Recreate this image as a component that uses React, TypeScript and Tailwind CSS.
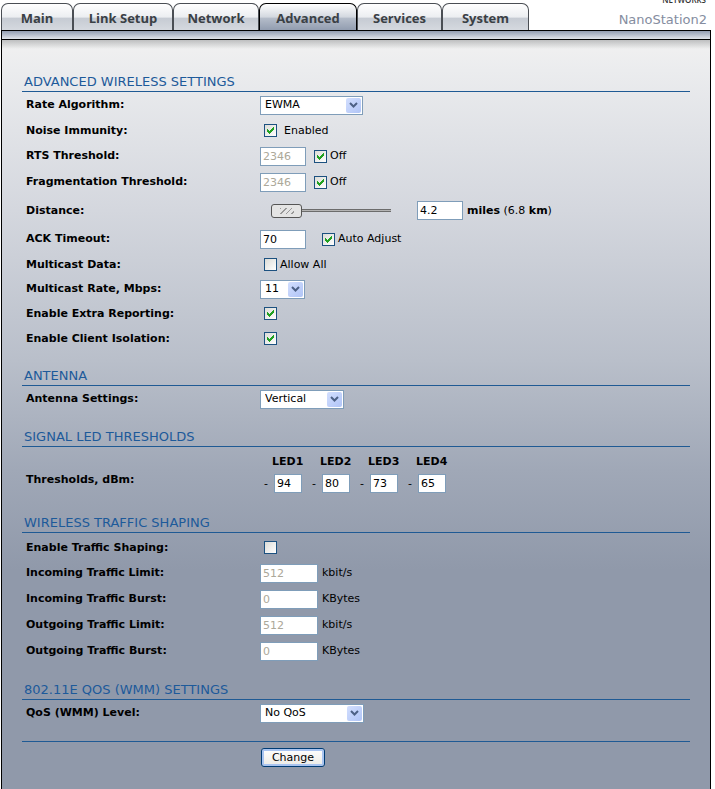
import { useState } from 'react'
import type { InputHTMLAttributes, ReactNode } from 'react'
import clsx from 'clsx'

const tabs = [
  { label: 'Main', width: 'w-[72px]' },
  { label: 'Link Setup', width: 'w-[100px]' },
  { label: 'Network', width: 'w-[86px]' },
  { label: 'Advanced', width: 'w-[98px]', active: true },
  { label: 'Services', width: 'w-[85px]' },
  { label: 'System', width: 'w-[87px]' },
]

const leds = [
  { id: 'led1', label: 'LED1', value: '94' },
  { id: 'led2', label: 'LED2', value: '80' },
  { id: 'led3', label: 'LED3', value: '73' },
  { id: 'led4', label: 'LED4', value: '65' },
]

const limits = [
  { id: 'in-limit', label: 'Incoming Traffic Limit:', value: '512', unit: 'kbit/s' },
  { id: 'in-burst', label: 'Incoming Traffic Burst:', value: '0', unit: 'KBytes' },
  { id: 'out-limit', label: 'Outgoing Traffic Limit:', value: '512', unit: 'kbit/s' },
  { id: 'out-burst', label: 'Outgoing Traffic Burst:', value: '0', unit: 'KBytes' },
]

function Section({ title, children }: { title: string; children: ReactNode }) {
  return (
    <section className="mb-[15px]">
      <h2 className="h-5 border-b border-[#1f5a94] pl-[2px] text-[13px] leading-5 text-[#1d5a9a]">{title}</h2>
      {children}
    </section>
  )
}

function Row({ label, htmlFor, height = 'h-[26px]', children }: {
  label: string
  htmlFor: string
  height?: string
  children: ReactNode
}) {
  return (
    <div className={clsx('flex items-center', height)}>
      <label htmlFor={htmlFor} className="w-[238px] shrink-0 pl-1 font-bold">{label}</label>
      <div className="flex items-center">{children}</div>
    </div>
  )
}

function TextBox({ className, ...props }: InputHTMLAttributes<HTMLInputElement>) {
  return (
    <input
      type="text"
      className={clsx('h-[19px] border border-[#7f9db9] bg-white px-[2px] text-black disabled:text-[#aca899]', className)}
      {...props}
    />
  )
}

function CheckBox({ id, checked = false }: { id: string; checked?: boolean }) {
  return (
    <span className="grid size-[13px] shrink-0">
      <input
        id={id}
        type="checkbox"
        defaultChecked={checked}
        className="peer col-start-1 row-start-1 size-[13px] appearance-none border border-[#1c5180] bg-linear-to-br from-[#dcdcd7] to-white"
      />
      <svg
        viewBox="0 0 13 13"
        className="pointer-events-none invisible col-start-1 row-start-1 size-[13px] peer-checked:visible"
        fill="#21a121"
        shapeRendering="crispEdges"
      >
        <path d="M3 5h1v1h1v1h1v-1h1v-1h1v-1h1v-1h1v3h-1v1h-1v1h-1v1h-1v1h-1v-1h-1v-1h-1z" />
      </svg>
    </span>
  )
}

function Select({ id, width, options }: { id: string; width: string; options: string[] }) {
  return (
    <span className={clsx('grid', width)}>
      <select
        id={id}
        className="col-start-1 row-start-1 h-[19px] w-full appearance-none border border-[#7f9db9] bg-white pl-1 text-black"
      >
        {options.map((option) => (
          <option key={option}>{option}</option>
        ))}
      </select>
      <span className="pointer-events-none col-start-1 row-start-1 mr-[2px] flex h-[15px] w-[15px] items-center justify-center self-center justify-self-end rounded-[2px] bg-linear-to-br from-[#d3dffe] to-[#b0c4f6]">
        <svg viewBox="0 0 9 6" className="h-[6px] w-[9px]" fill="none" stroke="#4d6185" strokeWidth="2">
          <path d="M1 1l3.500 3.500L8 1" />
        </svg>
      </span>
    </span>
  )
}

function DistanceSlider() {
  const [distance, setDistance] = useState(4.2)
  return (
    <>
      <input
        id="distance"
        type="range"
        min={0}
        max={120}
        step={0.1}
        value={distance}
        onChange={(e) => setDistance(Number(e.target.value))}
        className="ml-2 h-[14px] w-[123px] appearance-none bg-[linear-gradient(#484848,#b4b4b4_50%,#484848)] bg-[length:112px_3px] bg-right bg-no-repeat [&::-webkit-slider-thumb]:h-[14px] [&::-webkit-slider-thumb]:w-[31px] [&::-webkit-slider-thumb]:appearance-none [&::-webkit-slider-thumb]:rounded-[3px] [&::-webkit-slider-thumb]:border [&::-webkit-slider-thumb]:border-[#555] [&::-webkit-slider-thumb]:bg-[#e4e4e4] [&::-webkit-slider-thumb]:bg-[repeating-linear-gradient(135deg,#999_0px,#999_1px,#e4e4e4_1px,#e4e4e4_4px)] [&::-webkit-slider-thumb]:bg-[length:14px_6px] [&::-webkit-slider-thumb]:bg-center [&::-webkit-slider-thumb]:bg-no-repeat"
      />
      <TextBox
        className="mr-1 ml-[26px] w-[46px]"
        aria-label="Distance in miles"
        value={distance}
        onChange={(e) => setDistance(Number(e.target.value) || 0)}
      />
      <span>
        <b>miles</b> ({(distance * 1.609).toFixed(1)} <b>km</b>)
      </span>
    </>
  )
}

export default function App() {
  return (
    <div className="min-h-screen bg-white pr-1 pl-px font-['DejaVu_Sans',Verdana,sans-serif] text-[11px] leading-[14px] text-black">
      <header className="flex h-[30px] justify-between">
        <nav className="flex items-end font-['Open_Sans','Noto_Sans',sans-serif] text-[13px] font-bold">
          {tabs.map((tab) => (
            <a
              key={tab.label}
              href="#"
              className={clsx(
                'flex h-[27px] items-center justify-center rounded-t-[7px] border border-b-0 pt-[2px] text-[#3a4045]',
                tab.width,
                tab.active
                  ? 'border-black bg-[linear-gradient(#fff,#d3d8df_50%,#b4bcc9_55%,#929db0)]'
                  : 'border-[#4a4e54] bg-[linear-gradient(#fff,#eceef1_50%,#c6cbd3_55%,#d5d9df)]',
              )}
            >
              {tab.label}
            </a>
          ))}
        </nav>
        <div className="flex flex-col items-end pr-1">
          <div className="flex h-1 items-end overflow-hidden pr-px font-['Open_Sans',sans-serif] text-[8px] leading-[9px] font-semibold text-[#333]">NETWORKS</div>
          <div className="mt-2 text-[13px] leading-4 text-[#858da0]">NanoStation2</div>
        </div>
      </header>

      <div className="h-[10px] border border-black bg-linear-to-b from-[#929db1] to-[#e1e4ea]" />

      <main className="min-h-[calc(100vh-40px)] border-x border-black bg-[#9099aa] bg-[linear-gradient(#8b8d8f80,#8b8d8f00_9px),linear-gradient(#f1f1f1,#ebecee_30px,#d4d7de_170px,#b9bfca_320px,#a0a8b7_430px,#9099aa_530px)] pt-8 pr-5 pb-5 pl-5">
        <form onSubmit={(e) => e.preventDefault()}>
          <Section title="ADVANCED WIRELESS SETTINGS">
            <Row label="Rate Algorithm:" htmlFor="rate-algorithm">
              <Select id="rate-algorithm" width="w-[103px]" options={['EWMA', 'Optimistic', 'Conservative']} />
            </Row>
            <Row label="Noise Immunity:" htmlFor="noise" height="h-[25px]">
              <label className="flex items-center gap-[7px] pl-1">
                <CheckBox id="noise" checked />
                Enabled
              </label>
            </Row>
            <Row label="RTS Threshold:" htmlFor="rts">
              <TextBox id="rts" className="w-[46px]" defaultValue="2346" disabled />
              <label className="flex items-center gap-[3px] pl-2">
                <CheckBox id="rts-off" checked />
                Off
              </label>
            </Row>
            <Row label="Fragmentation Threshold:" htmlFor="frag">
              <TextBox id="frag" className="w-[46px]" defaultValue="2346" disabled />
              <label className="flex items-center gap-[3px] pl-2">
                <CheckBox id="frag-off" checked />
                Off
              </label>
            </Row>
            <Row label="Distance:" htmlFor="distance" height="h-[31px]">
              <DistanceSlider />
            </Row>
            <Row label="ACK Timeout:" htmlFor="ack">
              <TextBox id="ack" className="w-[46px]" defaultValue="70" />
              <label className="flex items-center gap-[3px] pl-4">
                <CheckBox id="ack-auto" checked />
                Auto Adjust
              </label>
            </Row>
            <Row label="Multicast Data:" htmlFor="multicast" height="h-[25px]">
              <label className="flex items-center gap-[3px] pl-1">
                <CheckBox id="multicast" />
                Allow All
              </label>
            </Row>
            <Row label="Multicast Rate, Mbps:" htmlFor="multicast-rate" height="h-6">
              <Select id="multicast-rate" width="w-[45px]" options={['11', '5.5', '2', '1']} />
            </Row>
            <Row label="Enable Extra Reporting:" htmlFor="reporting" height="h-[25px]">
              <span className="pl-1"><CheckBox id="reporting" checked /></span>
            </Row>
            <Row label="Enable Client Isolation:" htmlFor="isolation" height="h-[25px]">
              <span className="pl-1"><CheckBox id="isolation" checked /></span>
            </Row>
          </Section>

          <Section title="ANTENNA">
            <Row label="Antenna Settings:" htmlFor="antenna">
              <Select id="antenna" width="w-[84px]" options={['Vertical', 'Horizontal', 'Adaptive']} />
            </Row>
          </Section>

          <Section title="SIGNAL LED THRESHOLDS">
            <div className="flex h-[51px] items-start pt-2">
              <span className="w-[238px] shrink-0 pt-[18px] pl-1 font-bold">Thresholds, dBm:</span>
              <div className="flex pl-1">
                {leds.map((led) => (
                  <div key={led.id} className="w-12">
                    <label htmlFor={led.id} className="mb-[5px] block pl-2 font-bold">{led.label}</label>
                    <div className="flex items-center gap-[6px]">
                      <span>-</span>
                      <TextBox id={led.id} className="w-7" defaultValue={led.value} />
                    </div>
                  </div>
                ))}
              </div>
            </div>
          </Section>

          <Section title="WIRELESS TRAFFIC SHAPING">
            <div className="pt-[2px] pb-px">
              <Row label="Enable Traffic Shaping:" htmlFor="shaping" height="h-[25px]">
                <span className="pl-1"><CheckBox id="shaping" /></span>
              </Row>
              {limits.map((limit) => (
                <Row key={limit.id} label={limit.label} htmlFor={limit.id}>
                  <TextBox id={limit.id} className="mr-1 w-[58px]" defaultValue={limit.value} disabled />
                  {limit.unit}
                </Row>
              ))}
            </div>
          </Section>

          <Section title="802.11E QOS (WMM) SETTINGS">
            <Row label="QoS (WMM) Level:" htmlFor="qos">
              <Select id="qos" width="w-[104px]" options={['No QoS', '802.11e']} />
            </Row>
          </Section>

          <div className="border-t border-[#1f5a94] pt-[6px] pl-[239px]">
            <button
              type="submit"
              className="h-[19px] w-16 rounded-[3px] border border-[#003c74] bg-linear-to-b from-white to-[#ecebe5] leading-[15px] shadow-[inset_0_0_0_2px_#a9c4f0]"
            >
              Change
            </button>
          </div>
        </form>
      </main>
    </div>
  )
}
